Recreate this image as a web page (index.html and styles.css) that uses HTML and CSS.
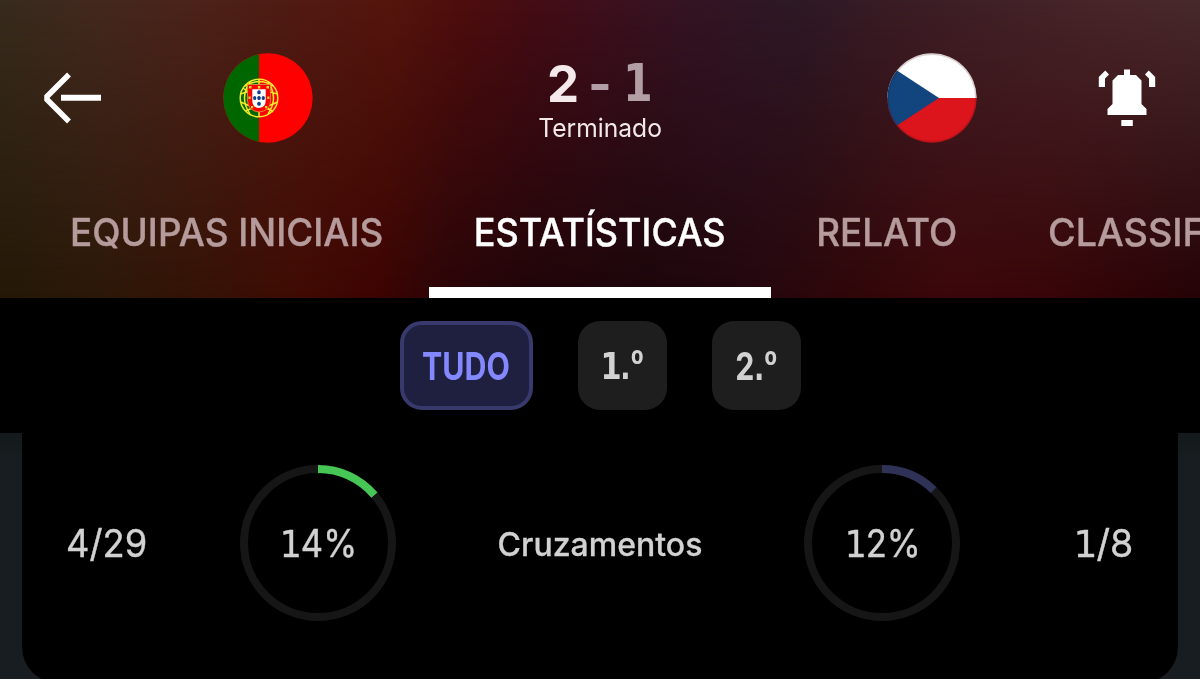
FILE: index.html
```
<!DOCTYPE html>
<html lang="pt">
<head>
<meta charset="utf-8">
<title>Portugal 2 - 1 Chéquia</title>
<link rel="stylesheet" href="styles.css">
</head>
<body>
<header class="match">
  <div class="match-bar">
    <svg class="back" viewBox="0 0 60 52" aria-label="Voltar"><path d="M26 2.500 4 24.500v3L26 49.500" fill="none" stroke="#fff" stroke-width="5.500"/><path d="M18 25.800H58" stroke="#fff" stroke-width="6"/></svg>
    <svg class="flag" viewBox="0 0 90 90" aria-label="Portugal">
      <clipPath id="disc"><circle cx="45" cy="45" r="44.700"/></clipPath>
      <g clip-path="url(#disc)">
        <path fill="#f00" d="M0 0h90v90H0z"/><path fill="#060" d="M0 0h36v90H0z"/>
      </g>
      <g fill="none" stroke="#f0e92c" stroke-width="1.500">
        <circle cx="36" cy="45" r="18.800"/>
        <path d="M36 26v38M17.500 41Q36 34 54.500 41M17.500 49Q36 59 54.500 49M22 33Q36 24 50 33M23 58Q36 50 49 58M27 29Q16 45 27 61M45 29Q56 45 45 61M20 35l30 24"/>
      </g>
      <path d="M24.500 31.500h23V47q0 11-11.500 12Q24.500 58 24.500 47z" fill="#f00" stroke="#d8a03a" stroke-width=".8"/>
      <path d="M29.300 36.300h13.400v11q0 7.400-6.700 7.700-6.700-.3-6.700-7.700z" fill="#fff"/>
      <g fill="#123d8c"><rect x="34.300" y="37.300" width="3.400" height="4" rx="1.500"/><rect x="34.300" y="43" width="3.400" height="4" rx="1.500"/><rect x="34.300" y="48.700" width="3.400" height="4" rx="1.500"/><rect x="30.200" y="43" width="3" height="4" rx="1.500"/><rect x="38.800" y="43" width="3" height="4" rx="1.500"/></g>
      <g fill="#f0d92c"><path d="M26 33h2.500v2.500H26zM34.800 33h2.500v2.500h-2.500zM43.500 33H46v2.500h-2.500zM25.500 43.500h2.200V46h-2.200zM44.200 43.500h2.200V46h-2.200zM28 53h2.200v2.300H28zM42 53h2.200v2.300H42z"/></g>
    </svg>
    <div class="result">
      <div class="score"><span>2</span><span class="dim">-</span><span class="dim one">1</span></div>
      <div class="status"><span>Terminado</span></div>
    </div>
    <svg class="flag" viewBox="0 0 90 90" aria-label="Chéquia">
      <g clip-path="url(#disc)">
        <path fill="#fff" d="M0 0h90v45H0z"/><path fill="#dc141b" d="M0 45h90v45H0z"/><path fill="#12457e" d="M-7 6.500 52 45-7 83.500z"/>
        <circle cx="45" cy="45" r="44" fill="none" stroke="#401018" stroke-opacity=".2" stroke-width="1.800"/>
      </g>
    </svg>
    <svg class="bell" viewBox="0 0 60 60" aria-label="Notificações" fill="#fff"><path d="M27 1.500h6V7h6l5.500 5.500V36l5 5v6h-39v-6l5-5V12.500L21 7h6zM24.300 52h11.500v6H24.300zM8.300 2.500 12 6.500 8 10.500V19H1.800V9zM51.700 2.500 48 6.500l4 4V19h6.200V9z"/></svg>
  </div>
  <nav class="tabs">
    <a class="tab tab-lineups"><span>EQUIPAS INICIAIS</span></a>
    <a class="tab tab-stats active"><span>ESTATÍSTICAS</span></a>
    <a class="tab tab-report"><span>RELATO</span></a>
    <a class="tab tab-table"><span>CLASSIF</span></a>
  </nav>
</header>
<div class="periods">
  <button class="period selected"><span>TUDO</span></button>
  <button class="period"><span><i class="one">1</i><b>.º</b></span></button>
  <button class="period"><span>2<b>.º</b></span></button>
</div>
<main class="stats">
  <section class="card">
    <div class="count home"><span>4/29</span></div>
    <div class="ring">
      <svg viewBox="0 0 156 156"><circle class="track" cx="78" cy="78" r="74"/><circle class="value green" cx="78" cy="78" r="74" pathLength="100" stroke-dasharray="13.800 100"/></svg>
      <span><i class="one">1</i>4%</span>
    </div>
    <div class="label"><span>Cruzamentos</span></div>
    <div class="ring">
      <svg viewBox="0 0 156 156"><circle class="track" cx="78" cy="78" r="74"/><circle class="value blue" cx="78" cy="78" r="74" pathLength="100" stroke-dasharray="12.300 100"/></svg>
      <span><i class="one">1</i>2%</span>
    </div>
    <div class="count away"><span><i class="one">1</i>/8</span></div>
  </section>
</main>
</body>
</html>
```
FILE: styles.css
```
* { box-sizing: border-box; }
body {
  margin: 0;
  height: 679px;
  overflow: hidden;
  background: #000;
  color: #d2d2d2;
  font-family: Inter, "Liberation Sans", sans-serif;
}
span { display: inline-block; white-space: nowrap; }
svg { display: block; }
.one { font-family: "DejaVu Sans", sans-serif; font-style: normal; letter-spacing: -1px; }

.match {
  position: relative;
  z-index: 0;
  height: 298px;
  overflow: hidden;
  background: linear-gradient(90deg, #241806 0, #2c1808 100px, #351206 200px, #400b04 300px, #3c0402 380px, #2a0508 450px, #200509 530px, #1c060a 650px, #24070e 750px, #300709 850px, #3c070a 950px, #380508 1050px, #250306 1200px);
}
.match::before {
  content: "";
  position: absolute;
  inset: 0;
  z-index: -1;
  background: linear-gradient(90deg, #372b1d 0, #43281e 100px, #4c2219 200px, #501a12 300px, #54150c 390px, #4e0d0d 460px, #450c14 530px, #3e0f1c 600px, #331424 700px, #2d1926 800px, #3a1c24 900px, #402127 1000px, #472529 1100px, #48292b 1200px);
  mask-image: linear-gradient(#000, transparent);
}
.match-bar {
  display: grid;
  grid-template-columns: 180px 90px 1fr 90px 180px;
  height: 188px;
  padding: 53px 43px 0;
}
.back { width: 60px; height: 52px; margin-top: 19px; }
.flag { width: 90px; height: 90px; }
.bell { width: 60px; height: 60px; margin: 15px 0 0 auto; }
.result { text-align: center; }
.score {
  display: flex;
  justify-content: center;
  height: 61px;
  color: #f4eaec;
  font-size: 51px;
  font-weight: 700;
  line-height: 61px;
}
.score span { width: 37px; }
.score .dim { color: #b19fa5; }
.score .one { transform: scaleX(.84); }
.status { height: 32px; color: #f2e8ea; font-size: 25.5px; line-height: 28px; }
.status span { transform: scaleX(.965); }

.tabs { display: flex; height: 110px; }
.tab {
  display: flex;
  flex: none;
  justify-content: center;
  height: 110px;
  padding-top: 20px;
  border-bottom: 11px solid transparent;
  color: #b59b9b;
  font-size: 38.5px;
  font-weight: 500;
  line-height: 48px;
}
.tab span { transform: scaleX(.957); -webkit-text-stroke: .4px; }
.tab-lineups { width: 402px; margin-left: 26px; margin-right: 1px; }
.tab-stats { width: 342px; }
.tab-stats span { transform: scaleX(.935); }
.tab-report { width: 232px; }
.tab-table { justify-content: flex-start; padding-left: 45px; }
.tab-table span { transform: scaleX(.98); transform-origin: left; }
.tab.active { color: #fff; border-color: #fff; }

.periods {
  display: flex;
  justify-content: center;
  gap: 45px;
  height: 135px;
  padding-top: 23px;
}
.period {
  display: flex;
  align-items: center;
  justify-content: center;
  width: 89px;
  height: 89px;
  padding: 0;
  border: 0;
  border-radius: 22px;
  background: #1e1e1e;
  color: #d2d2d2;
  font: 700 38px/48px Inter, "Liberation Sans", sans-serif;
}
.period span { transform: scaleX(.8); }
.period b {
  font: 700 42px/40px "Liberation Sans", sans-serif;
  letter-spacing: 1px;
}
.period.selected {
  width: 133px;
  border: 4px solid #38396c;
  background: #1f2040;
  color: #8388ff;
}

.stats {
  height: 246px;
  padding: 0 22px;
  overflow: hidden;
  background: linear-gradient(#14191b, #171d20 24px);
}
.card {
  display: grid;
  grid-template-columns: 218px 156px 1fr 156px 218px;
  align-items: center;
  height: 250px;
  padding: 0 0 30px;
  border-radius: 0 0 36px 36px;
  background: #000;
  font-size: 38px;
  line-height: 48px;
}
.ring { display: grid; place-items: center; }
.ring > * { grid-area: 1 / 1; }
.ring svg { width: 156px; height: 156px; }
.ring circle { fill: none; stroke-width: 8; }
.track { stroke: #161616; }
.value { transform: rotate(-90deg); transform-origin: center; }
.green { stroke: #46c655; }
.blue { stroke: #303157; }
.ring span, .count span { -webkit-text-stroke: .4px; }
.ring span { padding-left: 2px; transform: scaleX(.91); }
.home { padding-left: 44px; }
.home span { transform: scaleX(.955); transform-origin: left; }
.away { padding-right: 45px; text-align: right; }
.away span { transform: scaleX(.99); transform-origin: right; }
.label { padding-top: 4px; text-align: center; font-size: 32.5px; font-weight: 500; }
.label span { transform: scaleX(.985); -webkit-text-stroke: .3px; }
```
